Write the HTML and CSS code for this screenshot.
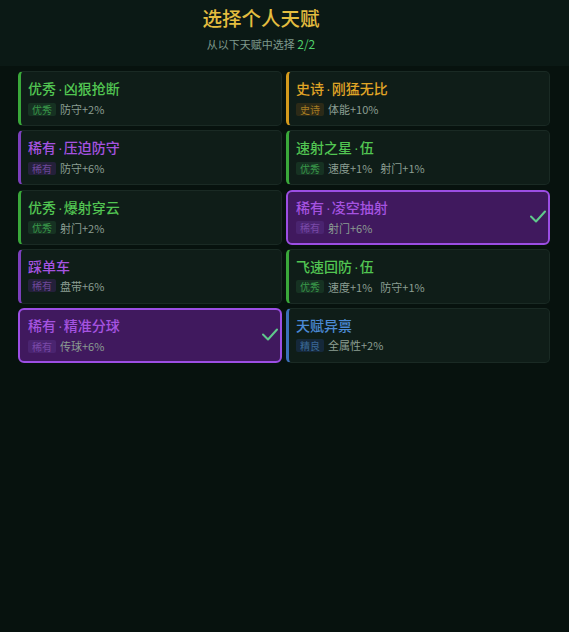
FILE: index.html
```html
<!DOCTYPE html>
<html lang="zh">
<head>
<meta charset="utf-8">
<link rel="stylesheet" href="styles.css">
</head>
<body>
<header class="header">
  <h1 class="title">选择个人天赋</h1>
  <p class="subtitle">从以下天赋中选择 <span class="count">2/2</span></p>
</header>
<main class="grid">
  <div class="card good">
    <div class="name">优秀<span class="dot">·</span>凶狠抢断</div>
    <div class="stats"><span class="tag">优秀</span><span class="stat">防守+2%</span></div>
  </div>
  <div class="card epic">
    <div class="name">史诗<span class="dot">·</span>刚猛无比</div>
    <div class="stats"><span class="tag">史诗</span><span class="stat">体能+10%</span></div>
  </div>
  <div class="card rare">
    <div class="name">稀有<span class="dot">·</span>压迫防守</div>
    <div class="stats"><span class="tag">稀有</span><span class="stat">防守+6%</span></div>
  </div>
  <div class="card good">
    <div class="name">速射之星<span class="dot">·</span>伍</div>
    <div class="stats"><span class="tag">优秀</span><span class="stat">速度+1%</span><span class="stat">射门+1%</span></div>
  </div>
  <div class="card good">
    <div class="name">优秀<span class="dot">·</span>爆射穿云</div>
    <div class="stats"><span class="tag">优秀</span><span class="stat">射门+2%</span></div>
  </div>
  <div class="card rare selected">
    <div class="name">稀有<span class="dot">·</span>凌空抽射</div>
    <div class="stats"><span class="tag">稀有</span><span class="stat">射门+6%</span></div>
    <svg class="check" viewBox="0 0 16 13" width="16" height="13"><path d="M1 6.5 L6 11.5 L15 1.5" fill="none" stroke="currentColor" stroke-width="2" stroke-linecap="round" stroke-linejoin="round"/></svg>
  </div>
  <div class="card rare">
    <div class="name">踩单车</div>
    <div class="stats"><span class="tag">稀有</span><span class="stat">盘带+6%</span></div>
  </div>
  <div class="card good">
    <div class="name">飞速回防<span class="dot">·</span>伍</div>
    <div class="stats"><span class="tag">优秀</span><span class="stat">速度+1%</span><span class="stat">防守+1%</span></div>
  </div>
  <div class="card rare selected">
    <div class="name">稀有<span class="dot">·</span>精准分球</div>
    <div class="stats"><span class="tag">稀有</span><span class="stat">传球+6%</span></div>
    <svg class="check" viewBox="0 0 16 13" width="16" height="13"><path d="M1 6.5 L6 11.5 L15 1.5" fill="none" stroke="currentColor" stroke-width="2" stroke-linecap="round" stroke-linejoin="round"/></svg>
  </div>
  <div class="card fine">
    <div class="name">天赋异禀</div>
    <div class="stats"><span class="tag">精良</span><span class="stat">全属性+2%</span></div>
  </div>
</main>
</body>
</html>
```

FILE: styles.css
```css
* { box-sizing: border-box; }
html, body {
  margin: 0;
  padding: 0;
  background: #07120e;
  height: 100%;
}
body {
  font-family: "Noto Sans CJK SC", "Noto Sans", sans-serif;
}
.header {
  background: #0b1915;
  height: 66px;
  display: flex;
  flex-direction: column;
  align-items: center;
  padding: 4px 47px 0 0;
}
.title {
  margin: 0;
  font-size: 19.5px;
  line-height: 27px;
  font-weight: 500;
  color: #e3bd3f;
}
.subtitle {
  margin: 5px 0 0;
  font-size: 11px;
  line-height: 16px;
  color: #7f9a8c;
}
.count {
  color: #4fcf6a;
  font-size: 12px;
}
.grid {
  display: grid;
  grid-template-columns: 1fr 1fr;
  column-gap: 4px;
  row-gap: 4.25px;
  padding: 5px 19px 0 18px;
}
.card {
  position: relative;
  height: 55px;
  background: #0f1d18;
  border: 1px solid #1a2a24;
  border-left: 3px solid #3aa83a;
  border-radius: 5px;
  padding: 7px 8px 0 7px;
}
.name {
  font-size: 14px;
  line-height: 18px;
  font-weight: 500;
}
.dot {
  font-family: "Liberation Sans", sans-serif;
  margin: 0 1px 0 2px;
}
.stats {
  display: flex;
  align-items: center;
  margin-top: 4px;
  height: 14px;
}
.tag {
  font-size: 10px;
  line-height: 13px;
  padding: 0 4px;
  border-radius: 2px;
  margin-right: 4px;
}
.stat {
  font-size: 11px;
  line-height: 14px;
  color: #8b9d92;
  margin-right: 8px;
}
.good { border-left-color: #3aa83a; }
.good .name { color: #52c552; }
.good .tag { background: #163222; color: #3a9a4a; }
.epic { border-left-color: #d59a1c; }
.epic .name { color: #e0a526; }
.epic .tag { background: #2c2a17; color: #a47c22; }
.rare { border-left-color: #7c3fbc; }
.rare .name { color: #a553e0; }
.rare .tag { background: #24203a; color: #6e4898; }
.fine { border-left-color: #3b6fb8; }
.fine .name { color: #4b8ad6; }
.fine .tag { background: #15283a; color: #3a6896; }
.selected {
  background: #40195e;
  border: 2px solid #9c4ee4;
  border-radius: 6px;
  padding-left: 8px;
  padding-top: 6px;
}
.selected .tag { background: #4a2470; color: #7a4aa8; }
.check {
  position: absolute;
  right: 2px;
  top: 18px;
  color: #5fc98c;
}
```
